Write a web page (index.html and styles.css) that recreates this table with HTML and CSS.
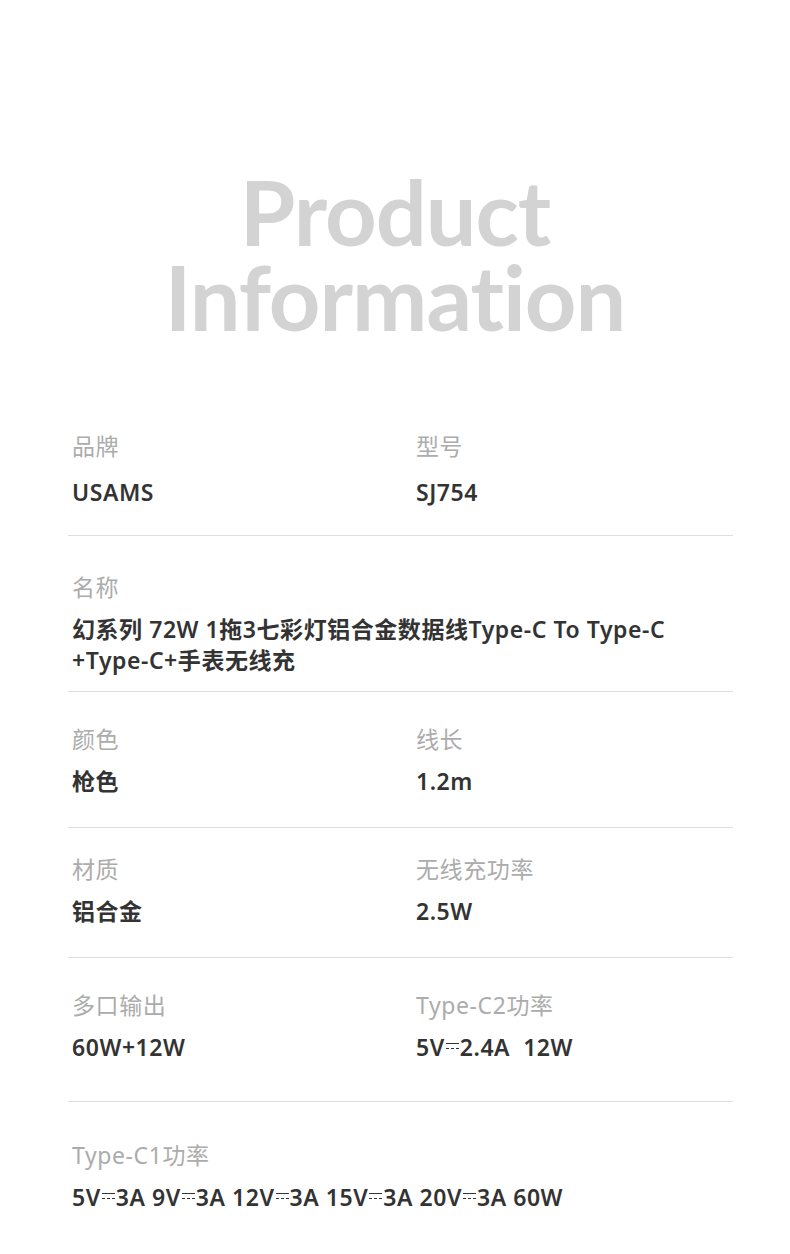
FILE: index.html
```html
<!DOCTYPE html>
<html lang="zh">
<head>
<meta charset="utf-8">
<title>Product Information</title>
<link rel="stylesheet" href="styles.css">
</head>
<body>
<div class="page">
  <h1 class="title"><span class="title-line">Product</span><span class="title-line">Information</span></h1>
  <div class="specs">
    <div class="row row-first">
      <div class="cell"><div class="label">品牌</div><div class="value">USAMS</div></div>
      <div class="cell"><div class="label">型号</div><div class="value">SJ754</div></div>
    </div>
    <div class="row row-name">
      <div class="cell wide"><div class="label">名称</div><div class="value multi">幻系列 72W 1拖3七彩灯铝合金数据线Type-C To Type-C<br>+Type-C+手表无线充</div></div>
    </div>
    <div class="row">
      <div class="cell"><div class="label">颜色</div><div class="value">枪色</div></div>
      <div class="cell"><div class="label">线长</div><div class="value">1.2m</div></div>
    </div>
    <div class="row row-tight">
      <div class="cell"><div class="label">材质</div><div class="value">铝合金</div></div>
      <div class="cell"><div class="label">无线充功率</div><div class="value">2.5W</div></div>
    </div>
    <div class="row row-tall">
      <div class="cell"><div class="label">多口输出</div><div class="value">60W+12W</div></div>
      <div class="cell"><div class="label">Type-C2功率</div><div class="value">5V<span class="dc"></span>2.4A&nbsp; 12W</div></div>
    </div>
    <div class="row row-last">
      <div class="cell wide"><div class="label">Type-C1功率</div><div class="value">5V<span class="dc"></span>3A 9V<span class="dc"></span>3A 12V<span class="dc"></span>3A 15V<span class="dc"></span>3A 20V<span class="dc"></span>3A 60W</div></div>
    </div>
  </div>
</div>
</body>
</html>
```

FILE: styles.css
```css
html, body {
  margin: 0;
  padding: 0;
  background: #ffffff;
}
body {
  font-family: "Noto Sans", "Noto Sans CJK SC", sans-serif;
  width: 790px;
  height: 1254px;
  overflow: hidden;
}
.page {
  padding: 0 57px 0 68px;
}
.title {
  margin: 0 0 0 -11px;
  padding-top: 169px;
  text-align: center;
  font-family: "Lato", "Noto Sans", sans-serif;
  font-size: 90px;
  line-height: 85px;
  font-weight: 700;
  color: #d3d3d3;
  letter-spacing: -1px;
  height: 262px;
  box-sizing: border-box;
}
.title-line {
  display: block;
  height: 85px;
}
.row {
  display: grid;
  grid-template-columns: 344px 1fr;
  padding: 32px 4px 31px;
  border-bottom: 1px solid #dedede;
}
.row-first {
  padding-top: 169px;
  padding-bottom: 28px;
}
.row-name {
  padding-top: 36px;
  padding-bottom: 15px;
}
.row-tight {
  padding-top: 26px;
}
.row-tall {
  padding-bottom: 39px;
}
.row-last {
  padding-top: 38px;
  border-bottom: none;
}
.cell.wide {
  grid-column: 1 / 3;
}
.label {
  font-size: 23px;
  line-height: 30px;
  letter-spacing: 0.6px;
  color: #acacac;
  font-weight: 400;
}
.value {
  margin-top: 12px;
  font-size: 23px;
  line-height: 30px;
  letter-spacing: 0.55px;
  color: #333333;
  font-weight: 600;
}
.row-first .value {
  margin-top: 16px;
}
.value.multi {
  line-height: 31px;
}
.dc {
  display: inline-block;
  width: 13px;
  height: 4px;
  margin: 0 1px;
  vertical-align: 7px;
  border-top: 1.5px solid #333;
  border-bottom: 1.5px dashed #333;
}
```
